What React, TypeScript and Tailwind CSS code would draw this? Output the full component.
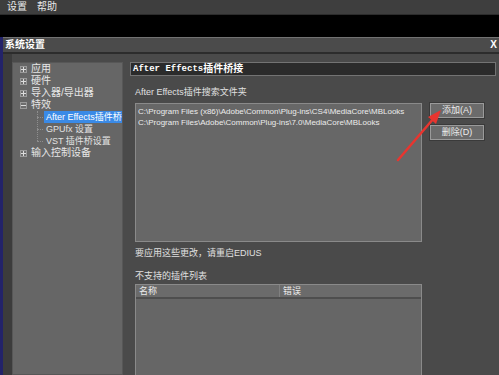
import React from 'react'

// 系统设置 dialog – After Effects 插件桥接 page

const font = { fontFamily: '"Liberation Sans", "Noto Sans CJK SC", sans-serif' }

function Expander({ open = false }: { open?: boolean }) {
  return (
    <span className="w-[7px] h-[7px] border border-[#9a9a9a] bg-[#6e6e6e] flex items-center justify-center relative">
      <span className="absolute w-[5px] h-px bg-[#dcdcdc]" />
      {!open && <span className="absolute w-px h-[5px] bg-[#dcdcdc]" />}
    </span>
  )
}

function TreeRow({ label, open }: { label: string; open?: boolean }) {
  return (
    <div className="h-[12px] flex items-center pl-[7px] gap-[4px]">
      <Expander open={open} />
      <span className="text-[10px] leading-none text-[#e6e6e6]">{label}</span>
    </div>
  )
}

function ChildRow({ label, selected }: { label: string; selected?: boolean }) {
  return (
    <div className="h-[12px] flex items-center relative">
      <span className="absolute left-[24px] w-[6px] border-t border-dotted border-[#8e8e8e]" />
      <span
        className={`ml-[31px] h-[12px] flex-1 flex items-center pl-[2px] whitespace-nowrap overflow-hidden text-[9px] leading-none ${
          selected ? 'bg-[#3a8ae6] text-white' : 'text-[#e2e2e2]'
        }`}
      >
        {label}
      </span>
    </div>
  )
}

function Button({ label }: { label: string }) {
  return (
    <div className="w-[54px] h-[15px] bg-[#6b6b6b] border border-[#9a9a9a] outline outline-1 outline-[#3a3a3a] flex items-center justify-center text-[9px] text-[#ececec] leading-none">
      {label}
    </div>
  )
}

export default function App() {
  return (
    <div className="w-[499px] h-[375px] overflow-hidden bg-black relative flex flex-col" style={font}>
      {/* Menu bar */}
      <div className="h-[15px] bg-[#3e3e3e] border-b border-[#2c2c2c] flex items-center text-[10px] leading-none text-[#e8e8e8]">
        <span className="ml-[7px]">设置</span>
        <span className="ml-[10px]">帮助</span>
      </div>

      {/* desktop gap */}
      <div className="h-[22px] bg-black" />

      <div className="flex-1 flex min-h-0">
        <div className="w-[3px] bg-[#23236a]" />

        {/* Dialog */}
        <div className="flex-1 flex flex-col min-h-0">
          <div className="h-[15px] bg-[#4b4b4b] border-t border-[#727272] flex items-center justify-between px-[2px]">
            <span className="text-[10px] font-bold leading-none text-white">系统设置</span>
            <span className="text-[10px] font-bold leading-none text-white">X</span>
          </div>
          <div className="h-[2px] bg-[#2c2c2c]" />

          <div className="flex-1 flex bg-[#4a4a4a] min-h-0">
            <div className="w-[9px] bg-[#3c3c3c]" />

            {/* Tree */}
            <div className="w-[111px] mt-[8px] bg-[#666666] border border-[#575757] relative">
              <span className="absolute left-[24px] top-[48px] h-[30px] border-l border-dotted border-[#8e8e8e]" />
              <TreeRow label="应用" />
              <TreeRow label="硬件" />
              <TreeRow label="导入器/导出器" />
              <TreeRow label="特效" open />
              <ChildRow label="After Effects插件桥接" selected />
              <ChildRow label="GPUfx 设置" />
              <ChildRow label="VST 插件桥设置" />
              <TreeRow label="输入控制设备" />
            </div>

            {/* Page */}
            <div className="flex-1 flex flex-col pl-[7px] pt-[8px] min-h-0">
              <div className="w-[366px] h-[14px] bg-[#2b2b2b] border border-[#737373] flex items-center pl-[2px] text-white">
                <span className="text-[9px] font-bold leading-none" style={{ fontFamily: '"Liberation Mono", monospace' }}>
                  After Effects
                </span>
                <span className="text-[10px] font-bold leading-none">插件桥接</span>
              </div>

              <div className="mt-[10px] h-[12px] pl-[5px] flex items-center text-[9px] leading-none text-[#e0e0e0]">
                After Effects插件搜索文件夹
              </div>

              <div className="mt-[5px] flex">
                <div className="ml-[5px] w-[287px] h-[139px] bg-[#676767] border border-[#8a8a8a] pt-[2px] pl-[2px] text-[8px] leading-[11px] text-[#ececec] whitespace-nowrap">
                  <div>C:\Program Files (x86)\Adobe\Common\Plug-ins\CS4\MediaCore\MBLooks</div>
                  <div>C:\Program Files\Adobe\Common\Plug-ins\7.0\MediaCore\MBLooks</div>
                </div>
                <div className="ml-[8px] flex flex-col gap-[7px]">
                  <Button label="添加(A)" />
                  <Button label="删除(D)" />
                </div>
              </div>

              <div className="mt-[5px] h-[12px] pl-[5px] flex items-center text-[9px] leading-none text-[#e0e0e0]">
                要应用这些更改，请重启EDIUS
              </div>
              <div className="mt-[11px] h-[12px] pl-[5px] flex items-center text-[9px] leading-none text-[#e0e0e0]">
                不支持的插件列表
              </div>

              <div className="mt-[2px] ml-[5px] w-[287px] flex-1 bg-[#666666] border border-[#8a8a8a] border-b-0 flex flex-col">
                <div className="h-[14px] bg-[#6b6b6b] border-b-2 border-[#4e4e4e] flex items-center text-[9px] leading-none text-[#ececec]">
                  <span className="pl-[3px] w-[143px]">名称</span>
                  <span className="border-l border-[#808080] h-full flex items-center pl-[3px]">错误</span>
                </div>
              </div>
            </div>
          </div>
        </div>
      </div>

      {/* red annotation arrow */}
      <svg className="absolute left-0 top-0 pointer-events-none" width="499" height="375">
        <line x1="398" y1="160" x2="434" y2="118" stroke="#e8352f" strokeWidth="2.5" strokeLinecap="round" />
        <polygon points="441,110 428,117 436,124" fill="#e8352f" />
      </svg>
    </div>
  )
}
